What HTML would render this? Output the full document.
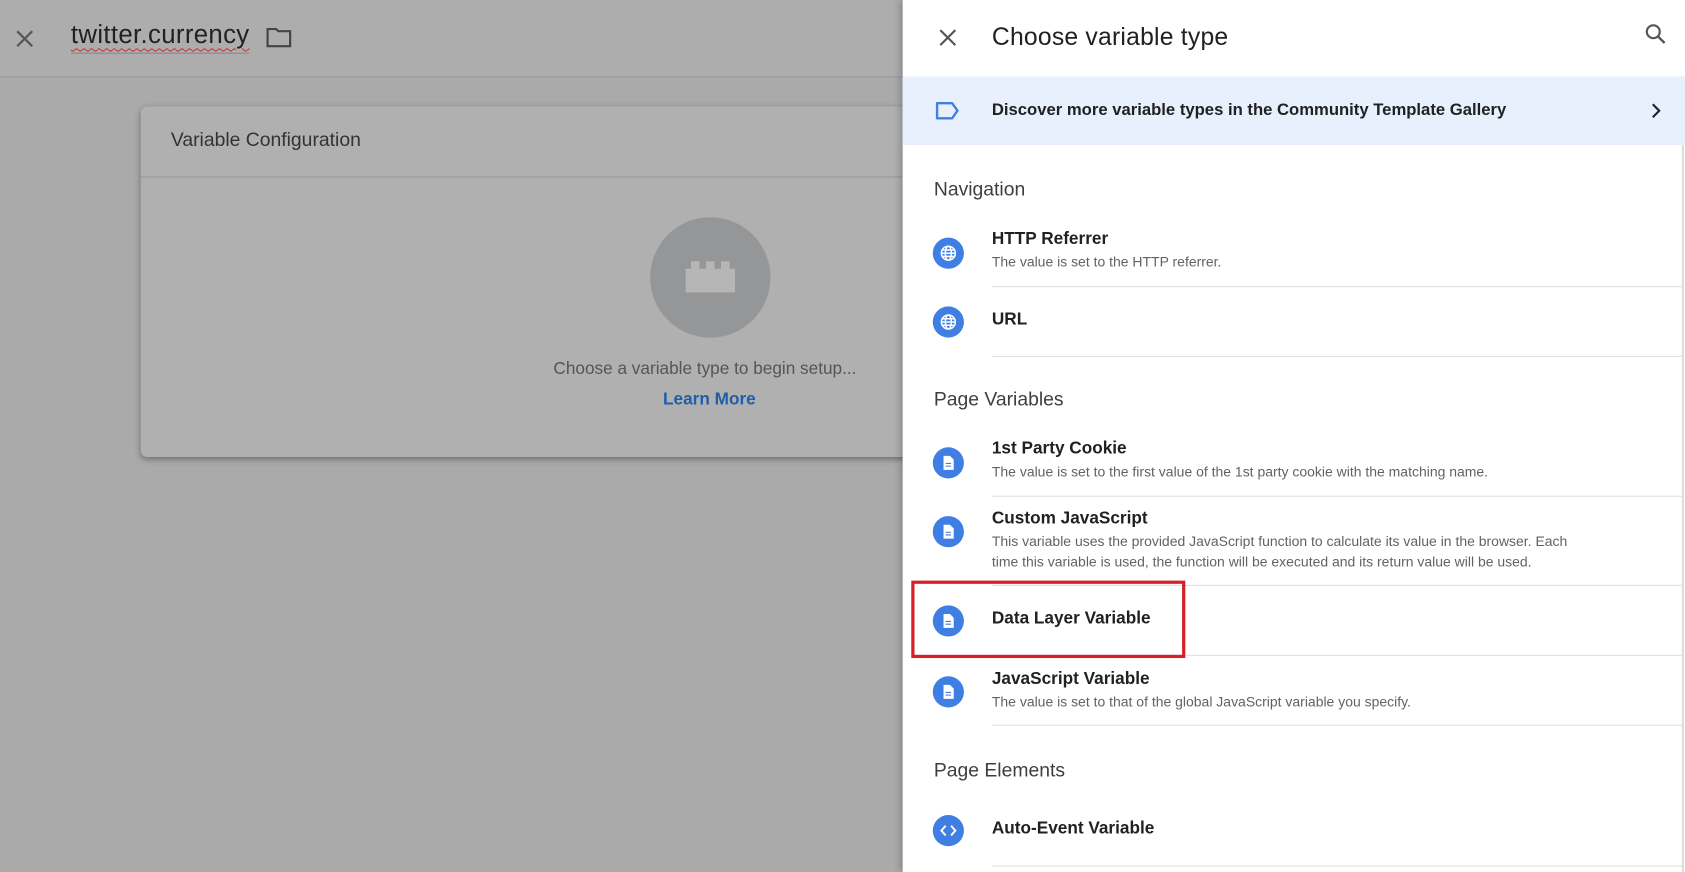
<!DOCTYPE html>
<html><head><meta charset="utf-8"><style>
html,body{margin:0;padding:0;width:1685px;height:872px;overflow:hidden;background:#aaaaab;}
#s{position:absolute;left:0;top:0;width:1568px;height:811px;transform:scale(1.07462,1.07521);transform-origin:0 0;font-family:"Liberation Sans",Arial,sans-serif;}
.a{position:absolute;white-space:nowrap;}
.t{font-size:16px;font-weight:bold;color:#202124;}
.d{font-size:13px;color:#5f6368;}
.h{font-size:18px;color:#3c4043;}
.ic{position:absolute;width:29px;height:29px;border-radius:50%;background:#3f7fe3;}
.ic svg{position:absolute;left:0;top:0}
.dv{position:absolute;left:83px;right:3px;height:1px;background:#e0e0e0;}
</style></head><body><div id="s">
<div class="a" style="left:0;top:0;width:840px;height:71px;background:#adadad;border-bottom:1px solid #999;"></div>
<svg class="a" style="left:13px;top:26px" width="20" height="20" viewBox="0 0 20 20"><path d="M3 3L17 17M17 3L3 17" stroke="#555" stroke-width="2"/></svg>
<div class="a" style="left:66px;top:19px;font-size:24px;color:#202124;border-bottom:1px solid #888;padding-bottom:2px;text-decoration:underline wavy #c33;text-underline-offset:4px;text-decoration-thickness:1px;letter-spacing:0.3px">twitter.currency</div>
<svg class="a" style="left:247px;top:24px" width="26" height="22" viewBox="0 0 26 22"><path d="M2 3h8l2 2h11v14H2z" fill="none" stroke="#444" stroke-width="2"/></svg>
<div class="a" style="left:131px;top:99px;width:760px;height:326px;background:#b0b0b0;border-radius:6px;box-shadow:0 2px 6px rgba(0,0,0,.35);"></div>
<div class="a" style="left:131px;top:164px;width:709px;height:1px;background:#9a9a9a"></div>
<div class="a" style="left:159px;top:120px;font-size:18px;color:#333">Variable Configuration</div>
<div class="a" style="left:605px;top:202px;width:112px;height:112px;border-radius:50%;background:#959698"></div>
<div class="a" style="left:638px;top:250px;width:46px;height:22px;background:#b6b6b6"></div>
<div class="a" style="left:643px;top:243px;width:36px;height:8px;background:repeating-linear-gradient(90deg,#b6b6b6 0 8px,transparent 8px 14px)"></div>
<div class="a" style="left:515px;top:335px;font-size:16px;color:#555">Choose a variable type to begin setup...</div>
<div class="a" style="left:617px;top:363px;font-size:16px;font-weight:bold;color:#1f5ea8">Learn More</div>

<div class="a" style="left:840px;top:0;width:728px;height:811px;background:#fff;box-shadow:-3px 0 6px rgba(0,0,0,.2)">
<svg class="a" style="left:32px;top:25px" width="20" height="20" viewBox="0 0 20 20"><path d="M3 3L17 17M17 3L3 17" stroke="#555" stroke-width="2"/></svg>
<div class="a" style="left:83px;top:21px;font-size:23px;color:#202124;letter-spacing:0.2px">Choose variable type</div>
<svg class="a" style="left:690px;top:21px" width="22" height="22" viewBox="0 0 22 22"><circle cx="8.5" cy="8.5" r="6" fill="none" stroke="#555" stroke-width="2"/><path d="M13 13l6 6" stroke="#555" stroke-width="2.2"/></svg>
<div class="a" style="left:0;top:71px;width:728px;height:64px;background:#e8f0fe"></div>
<svg class="a" style="left:30px;top:94px" width="24" height="18" viewBox="0 0 24 18"><path d="M2 2h14l5 7-5 7H2z" fill="none" stroke="#3f7fe3" stroke-width="2.2" stroke-linejoin="round"/></svg>
<div class="a t" style="left:83px;top:94px;font-size:15.5px">Discover more variable types in the Community Template Gallery</div>
<svg class="a" style="left:695px;top:95px" width="12" height="16" viewBox="0 0 12 16"><path d="M3 2l6 6-6 6" fill="none" stroke="#222" stroke-width="2"/></svg>
<div class="a" style="left:725px;top:135px;width:2px;height:676px;background:#ddd"></div>

<div class="a h" style="left:29px;top:166px">Navigation</div>
<div class="ic" style="left:28px;top:221px"><svg width="29" height="29" viewBox="0 0 29 29"><g fill="none" stroke="#fff" stroke-width="1.4"><circle cx="14.5" cy="14.5" r="6.5"/><ellipse cx="14.5" cy="14.5" rx="2.8" ry="6.5"/><path d="M8 14.5h13M9 11.5h11M9 17.5h11"/></g></svg></div>
<div class="a t" style="left:83px;top:214px">HTTP Referrer</div><div class="a d" style="left:83px;top:236px">The value is set to the HTTP referrer.</div>
<div class="dv" style="top:266px"></div>
<div class="ic" style="left:28px;top:285px"><svg width="29" height="29" viewBox="0 0 29 29"><g fill="none" stroke="#fff" stroke-width="1.4"><circle cx="14.5" cy="14.5" r="6.5"/><ellipse cx="14.5" cy="14.5" rx="2.8" ry="6.5"/><path d="M8 14.5h13M9 11.5h11M9 17.5h11"/></g></svg></div>
<div class="a t" style="left:83px;top:289px">URL</div>
<div class="dv" style="top:331px"></div>
<div class="a h" style="left:29px;top:361px">Page Variables</div>
<div class="ic" style="left:28px;top:416px"><svg width="29" height="29" viewBox="0 0 29 29"><path d="M10 8h6l3.5 3.5V21H10z" fill="#fff"/><path d="M12 15h5M12 17.5h5" stroke="#3f7fe3" stroke-width="1"/></svg></div>
<div class="a t" style="left:83px;top:409px">1st Party Cookie</div><div class="a d" style="left:83px;top:431px">The value is set to the first value of the 1st party cookie with the matching name.</div>
<div class="dv" style="top:461px"></div>
<div class="ic" style="left:28px;top:480px"><svg width="29" height="29" viewBox="0 0 29 29"><path d="M10 8h6l3.5 3.5V21H10z" fill="#fff"/><path d="M12 15h5M12 17.5h5" stroke="#3f7fe3" stroke-width="1"/></svg></div>
<div class="a t" style="left:83px;top:474px">Custom JavaScript</div><div class="a d" style="left:83px;top:494px;line-height:19px">This variable uses the provided JavaScript function to calculate its value in the browser. Each<br>time this variable is used, the function will be executed and its return value will be used.</div>
<div class="dv" style="top:544px"></div>
<div class="ic" style="left:28px;top:563px"><svg width="29" height="29" viewBox="0 0 29 29"><path d="M10 8h6l3.5 3.5V21H10z" fill="#fff"/><path d="M12 15h5M12 17.5h5" stroke="#3f7fe3" stroke-width="1"/></svg></div>
<div class="a t" style="left:83px;top:567px">Data Layer Variable</div>
<div class="dv" style="top:609px"></div>
<div class="ic" style="left:28px;top:629px"><svg width="29" height="29" viewBox="0 0 29 29"><path d="M10 8h6l3.5 3.5V21H10z" fill="#fff"/><path d="M12 15h5M12 17.5h5" stroke="#3f7fe3" stroke-width="1"/></svg></div>
<div class="a t" style="left:83px;top:623px">JavaScript Variable</div><div class="a d" style="left:83px;top:645px">The value is set to that of the global JavaScript variable you specify.</div>
<div class="dv" style="top:674px"></div>
<div class="a h" style="left:29px;top:706px">Page Elements</div>
<div class="ic" style="left:28px;top:758px"><svg width="29" height="29" viewBox="0 0 29 29"><path d="M12 10l-4 4.5 4 4.5M17 10l4 4.5-4 4.5" fill="none" stroke="#fff" stroke-width="1.8"/></svg></div>
<div class="a t" style="left:83px;top:762px">Auto-Event Variable</div>
<div class="dv" style="top:805px"></div>
<div class="a" style="left:8px;top:540px;width:249px;height:66px;border:3px solid #d42027"></div>
</div>
</div>
</body></html>
